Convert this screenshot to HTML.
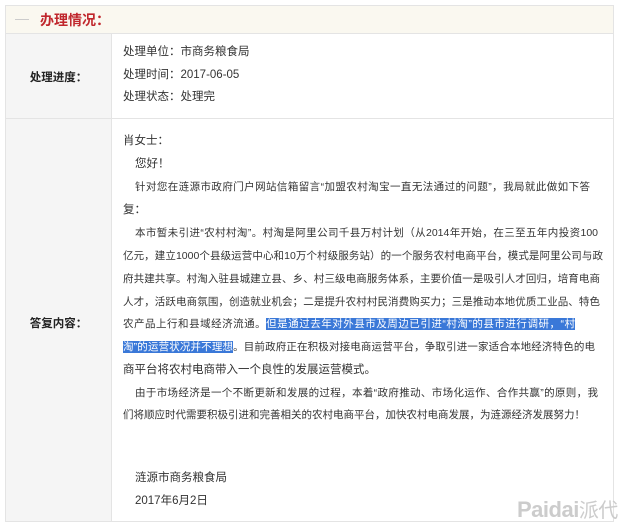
<!DOCTYPE html>
<html><head><meta charset="utf-8"><style>
body{margin:0;background:#fff;font-family:"Liberation Sans","Noto Sans CJK SC",sans-serif;font-size:12px;color:#333;}
.box{position:absolute;left:5px;top:5px;width:609px;height:517px;border:1px solid #e4e4e4;box-sizing:border-box;}
.hd{position:absolute;left:0;top:0;right:0;height:27px;background:#faf8f0;border-bottom:1px solid #e4e4e4;}
.hd .dash{position:absolute;left:9px;top:13px;width:14px;height:1px;background:#ccc;}
.hd .t{position:absolute;left:34px;top:4px;font-size:14px;font-weight:bold;color:#c0272d;}
.lc{position:absolute;left:0;width:105px;background:#f5f5f5;border-right:1px solid #e4e4e4;font-weight:bold;text-align:center;color:#222;font-size:11.5px;}
.sep{position:absolute;left:0;right:0;height:1px;background:#e4e4e4;}
.l{position:absolute;left:123px;white-space:nowrap;font-size:11.5px;line-height:16px;}
.j{position:absolute;white-space:nowrap;font-size:10.5px;line-height:16px;text-align:justify;text-align-last:justify;}
.hl{background:#3a78d8;color:#fff;}
.wm{position:absolute;left:517px;top:494px;font-size:22px;font-weight:bold;color:#ccc;letter-spacing:-0.5px;}
</style></head><body>
<div class="box">
<div class="hd"><div class="dash"></div><div class="t">办理情况：</div></div>
<div class="lc" style="top:28px;height:84px;"><div style="position:absolute;left:0;right:0;top:35px;">处理进度：</div></div>
<div class="sep" style="top:112px;"></div>
<div class="lc" style="top:113px;height:402px;"><div style="position:absolute;left:0;right:0;top:196px;">答复内容：</div></div>
</div>
<div class="l" style="top:44px">处理单位：市商务粮食局</div>
<div class="l" style="top:67px">处理时间：2017-06-05</div>
<div class="l" style="top:89px">处理状态：处理完</div>
<div class="l" style="top:133px">肖女士：</div>
<div class="l" style="top:156px;left:135px">您好！</div>
<div class="j" style="top:179px;left:135px;width:455px">针对您在涟源市政府门户网站信箱留言“加盟农村淘宝一直无法通过的问题”，我局就此做如下答</div>
<div class="l" style="top:202px">复：</div>
<div class="j" style="top:225px;left:135px;width:463px">本市暂未引进“农村村淘”。村淘是阿里公司千县万村计划（从2014年开始，在三至五年内投资100</div>
<div class="j" style="top:248px;left:123px;width:480px">亿元，建立1000个县级运营中心和10万个村级服务站）的一个服务农村电商平台，模式是阿里公司与政</div>
<div class="j" style="top:271px;left:123px;width:477px">府共建共享。村淘入驻县城建立县、乡、村三级电商服务体系，主要价值一是吸引人才回归，培育电商</div>
<div class="j" style="top:294px;left:123px;width:477px">人才，活跃电商氛围，创造就业机会；二是提升农村村民消费购买力；三是推动本地优质工业品、特色</div>
<div class="j" style="top:316px;left:123px;width:452px">农产品上行和县域经济流通。<span class="hl">但是通过去年对外县市及周边已引进“村淘”的县市进行调研，“村</span></div>
<div class="j" style="top:339px;left:123px;width:472px"><span class="hl">淘”的运营状况并不理想</span>。目前政府正在积极对接电商运营平台，争取引进一家适合本地经济特色的电</div>
<div class="l" style="top:362px">商平台将农村电商带入一个良性的发展运营模式。</div>
<div class="j" style="top:385px;left:135px;width:463px">由于市场经济是一个不断更新和发展的过程，本着“政府推动、市场化运作、合作共赢”的原则，我</div>
<div class="j" style="top:407px;left:123px;width:460px">们将顺应时代需要积极引进和完善相关的农村电商平台，加快农村电商发展，为涟源经济发展努力！</div>
<div class="l" style="top:470px;left:135px">涟源市商务粮食局</div>
<div class="l" style="top:493px;left:135px">2017年6月2日</div>
<div class="wm">Paidai<span style="font-weight:normal;font-size:20px">派代</span></div>
</body></html>
